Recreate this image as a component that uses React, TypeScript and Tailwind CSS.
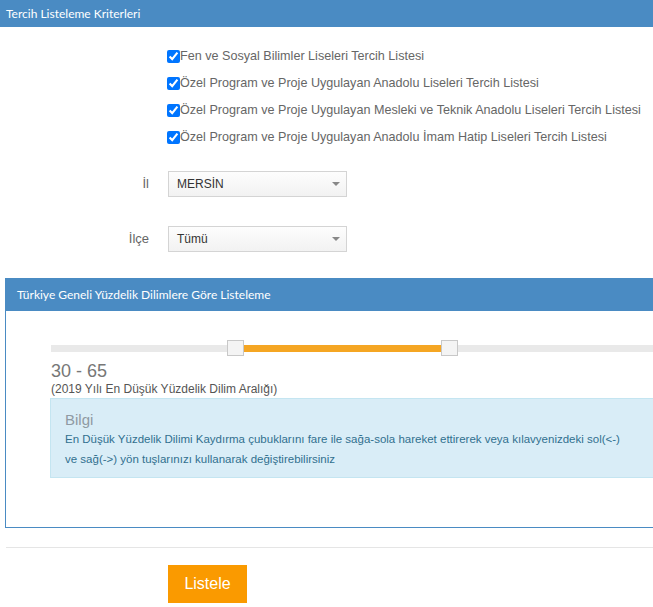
import React from 'react';

const lists = [
  'Fen ve Sosyal Bilimler Liseleri Tercih Listesi',
  'Özel Program ve Proje Uygulayan Anadolu Liseleri Tercih Listesi',
  'Özel Program ve Proje Uygulayan Mesleki ve Teknik Anadolu Liseleri Tercih Listesi',
  'Özel Program ve Proje Uygulayan Anadolu İmam Hatip Liseleri Tercih Listesi',
];

function SelectBox({ value }: { value: string }) {
  return (
    <div className="w-[179px] h-[26px] border border-[#d4d4d4] bg-gradient-to-b from-[#fdfdfd] to-[#f2f2f2] flex items-center justify-between pl-[8px] pr-[6px] text-[12px] text-[#333]">
      <span>{value}</span>
      <span className="w-0 h-0 border-l-[4px] border-r-[4px] border-t-[4px] border-l-transparent border-r-transparent border-t-[#888]" />
    </div>
  );
}

export default function App() {
  const [checked, setChecked] = React.useState([true, true, true, true]);
  const low = 30;
  const high = 65;

  return (
    <div className="w-[653px] h-[607px] overflow-hidden bg-white font-['Liberation_Sans',Arial,sans-serif]">
      <div className="h-[27px] bg-[#4a8bc3] flex items-center pl-[6px] text-white text-[12px] font-['Lato',sans-serif]">
        Tercih Listeleme Kriterleri
      </div>

      <div className="pt-[16px] pl-[167px]">
        {lists.map((t, i) => (
          <label key={t} className="h-[27px] flex items-center text-[12.6px] text-[#666] whitespace-nowrap cursor-pointer">
            <input
              type="checkbox"
              checked={checked[i]}
              onChange={() => setChecked(checked.map((c, j) => (j === i ? !c : c)))}
              className="w-[13px] h-[13px] m-0 shrink-0 accent-[#0075ff]"
            />
            <span>{t}</span>
          </label>
        ))}
      </div>

      <div className="mt-[20px] flex items-center">
        <span className="w-[149px] text-right text-[13px] text-[#666]">İl</span>
        <div className="ml-[19px]">
          <SelectBox value="MERSİN" />
        </div>
      </div>
      <div className="mt-[29px] flex items-center">
        <span className="w-[149px] text-right text-[13px] text-[#666]">İlçe</span>
        <div className="ml-[19px]">
          <SelectBox value="Tümü" />
        </div>
      </div>

      <div className="mt-[26px] ml-[5px] w-[710px]">
        <div className="h-[33px] bg-[#4a8bc3] flex items-center pl-[12px] text-white text-[12px] font-['Lato',sans-serif]">
          Türkiye Geneli Yüzdelik Dilimlere Göre Listeleme
        </div>
        <div className="h-[217px] border-l border-b border-l-[#4a8bc3] border-b-[#4a8bc3] pl-[45px] pt-[29px]">
          <div className="relative w-[613px] h-[16px] flex items-center">
            <div className="w-full h-[7px] bg-[#e9e9e9]" />
            <div
              className="absolute h-[7px] bg-[#f5a623] top-[5px]"
              style={{ left: `${low}%`, width: `${high - low}%` }}
            />
            <div
              className="absolute top-0 w-[17px] h-[16px] -ml-[8px] bg-[#f4f4f4] border border-[#c8c8c8]"
              style={{ left: `${low}%` }}
            />
            <div
              className="absolute top-0 w-[17px] h-[16px] -ml-[8px] bg-[#f4f4f4] border border-[#c8c8c8]"
              style={{ left: `${high}%` }}
            />
          </div>
          <div className="mt-[4px] text-[18px] leading-[22px] text-[#777]">
            {low} - {high}
          </div>
          <div className="text-[12px] leading-[15px] text-[#555]">(2019 Yılı En Düşük Yüzdelik Dilim Aralığı)</div>
          <div className="mt-[1px] -ml-[1px] h-[80px] bg-[#d9edf7] border border-[#c4e5f1] pl-[14px] pt-[12px]">
            <div className="text-[15px] leading-[18px] text-[#8f9aa3]">Bilgi</div>
            <div className="text-[11.5px] leading-[20px] text-[#31708f] whitespace-nowrap">
              En Düşük Yüzdelik Dilimi Kaydırma çubuklarını fare ile sağa-sola hareket ettirerek veya kılavyenizdeki sol(&lt;-)
              <br />
              ve sağ(-&gt;) yön tuşlarınızı kullanarak değiştirebilirsiniz
            </div>
          </div>
        </div>
      </div>

      <div className="mt-[19px] ml-[6px] h-px bg-[#e5e5e5]" />

      <div className="mt-[17px] pl-[168px]">
        <button className="w-[79px] h-[38px] bg-[#fa9a00] text-white text-[16px]">Listele</button>
      </div>
    </div>
  );
}
